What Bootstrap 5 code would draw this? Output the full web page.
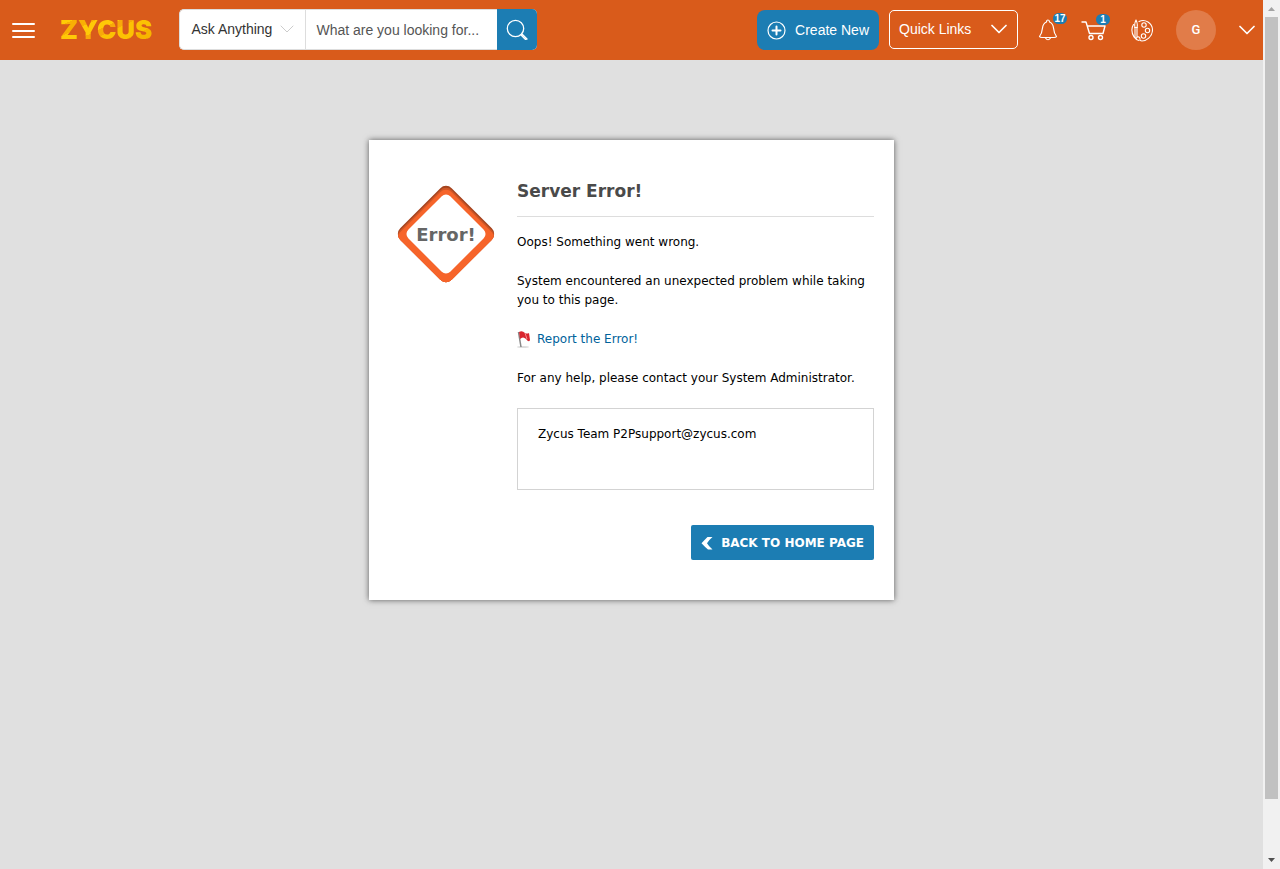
<!DOCTYPE html>
<html lang="en">
<head>
<meta charset="utf-8">
<meta name="viewport" content="width=device-width, initial-scale=1">
<title>Server Error</title>
<link href="https://cdn.jsdelivr.net/npm/bootstrap@5.3.0/dist/css/bootstrap.min.css" rel="stylesheet">
<style>
  :root { --brand: #d95b1b; --blue: #1c7db3; }
  body { background: #e0e0e0; color: #000; font: 14px/20px "Liberation Sans", Arial, sans-serif; }
  .topbar { height: 60px; background: var(--brand); padding: 0 8px 0 12px; }
  .plain { background: none; border: 0; padding: 0; color: #fff; display: flex; }
  .brand-name { font: 900 26px/30px Inter, sans-serif; margin: 0 27px 0 25px; text-decoration: none; color: transparent;
    background: linear-gradient(155deg, #ffcb05 0 15%, #f9b004 15% 30%, #ffc907 30% 45%, #f8a90a 45% 55%, #fcc203 55% 75%, #f7b500 75% 88%, #ffd21a 88%);
    -webkit-background-clip: text; background-clip: text; }
  .search { height: 41px; margin-bottom: 2px; border: 1px solid #ddd; border-right: 0; border-radius: 5px; background: #fff; }
  .scope { width: 126px; padding: 0 11px; border-right: 1px solid #ddd; color: #333; }
  .query { width: 191px; border: 0; padding: 2px 10px 0; color: #555; outline: 0; }
  .query::placeholder { color: #555; opacity: 1; }
  .go { width: 40px; margin: -1px 0; background: var(--blue); border-radius: 0 5px 5px 0; }
  .actions { gap: 23px; }
  .create { width: 122px; height: 40px; background: var(--blue); border-radius: 8px; padding: 0 10px; }
  .links { width: 129px; height: 39px; margin: 0 20px 2px 10px; border: 1px solid #fff; border-radius: 5px; padding: 0 10px 0 9px; }
  .count { position: absolute; top: -6px; left: 15px; height: 11px; min-width: 14px; padding: 0 1px; border-radius: 6px; background: var(--blue); font: bold 10px/11px "Liberation Sans", Arial, sans-serif; text-align: center; }
  .avatar { width: 40px; height: 40px; border-radius: 50%; background: #e17c49; font: 500 13px/20px Roboto, sans-serif; }
  .panel { width: 525px; margin-top: 80px; padding: 40px 20px 40px 28px; background: #fff; box-shadow: 0 0 6px rgba(0,0,0,.6); font: 12px/19px "DejaVu Sans", Verdana, sans-serif; }
  .sign { width: 98px; margin-top: 5px; }
  .details { width: 357px; }
  .panel h1 { font-size: 17px; line-height: 22px; font-weight: bold; color: #4a4a4a; padding-bottom: 14px; margin-bottom: 16px; border-bottom: 1px solid #ddd; }
  .panel p { margin-bottom: 20px; }
  .report { color: #00629b; text-decoration: none; gap: 5px; }
  .contact { height: 82px; border: 1px solid #d3d3d3; padding: 16px 20px; margin-bottom: 35px; }
  .back { height: 35px; background: var(--blue); border-radius: 2px; padding: 1px 10px 0; font-weight: bold; gap: 8px; }
  .rail { width: 17px; background: #f1f1f1; }
  .thumb { width: 13px; flex: 0 0 90%; background: #c1c1c1; }
  svg { display: block; flex: none; }
  .line { fill: none; stroke: currentColor; stroke-linecap: round; stroke-linejoin: round; }
</style>
</head>
<body>
<div class="d-flex min-vh-100">
  <div class="flex-grow-1">
    <header class="topbar d-flex align-items-center">
      <button class="plain" aria-label="Menu"><svg width="23" height="16" class="line" stroke-width="2"><path d="M1 2H22M1 9H22M1 15H22"/></svg></button>
      <a href="#" class="brand-name">ZYCUS</a>
      <form class="search d-flex">
        <button type="button" class="plain scope align-items-center justify-content-between">Ask Anything
          <svg width="14" height="8" class="line" style="color:#ccc"><path d="M1 1L7 7L13 1"/></svg></button>
        <input class="query" type="text" placeholder="What are you looking for..." aria-label="Search">
        <button type="button" class="plain go align-items-center justify-content-center" aria-label="Search"><svg width="22" height="22" class="line" stroke-width="1.3"><circle cx="9.5" cy="10.5" r="8.2"/><path d="M15 17L20 22M16 16L21 21"/></svg></button>
      </form>
      <div class="ms-auto d-flex align-items-center">
        <button class="plain create align-items-center justify-content-between"><svg width="19" height="19" class="line"><circle cx="9.5" cy="9.5" r="8.5" stroke-width="1.2"/><path d="M9.500 5.500V13.500M5.500 9.500H13.500" stroke-width="2"/></svg>Create New</button>
        <button class="plain links align-items-center justify-content-between">Quick Links<svg width="16" height="10" class="line" stroke-width="1.7"><path d="M1 1.500L8 8.500L15 1.500"/></svg></button>
        <div class="actions d-flex align-items-center">
          <button class="plain position-relative" aria-label="Notifications"><svg width="20" height="22" class="line" stroke-width="1.2"><path d="M8.500 3Q8.500 1 10 1Q11.500 1 11.500 3Q15 4.500 15.500 9C16 14 16.500 15 18.500 17.500Q18 18.500 16 18.500H4Q2 18.500 1.500 17.500C3.500 15 4 14 4.500 9Q5 4.500 8.500 3M7.500 19Q10 22.500 12.500 19"/></svg><span class="count">17</span></button>
          <button class="plain position-relative" aria-label="Cart"><svg width="27" height="21" class="line" stroke-width="1.4"><path d="M1 2H5L8.500 13.500H22L24 6H6.500"/><circle cx="10" cy="17.500" r="2"/><circle cx="19.500" cy="17.500" r="2"/></svg><span class="count">1</span></button>
          <button class="plain" aria-label="Theme"><svg width="22" height="23" class="line" stroke-width="1.1"><path d="M5 1Q3 5 4 8.500V18Q5 21 6 18V8.500Q7 5 5 1M3.500 8.500H6.500M8 2.500C14-0.500 21.500 4 21.500 11C21.500 18 15 22 11 22Q8.500 22 9 19.500Q8.500 17.500 6.500 18M2.500 5.500Q-1 11 3 18Q5 21 8 21.500"/><circle cx="13" cy="6" r="2.2"/><circle cx="16.5" cy="11.5" r="2.2"/><circle cx="12.5" cy="17" r="2.2"/></svg></button>
          <button class="plain avatar align-items-center justify-content-center">G</button>
          <button class="plain" aria-label="Account menu"><svg width="16" height="10" class="line" stroke-width="1.7"><path d="M1 1.500L8 8.500L15 1.500"/></svg></button>
        </div>
      </div>
    </header>
    <main class="panel mx-auto d-flex justify-content-between">
      <svg class="sign" width="98" height="98" viewBox="0 0 98 98" role="img" aria-label="Error!">
        <defs><clipPath id="edge"><rect x="12.6" y="12.6" width="72.8" height="72.8" rx="8" transform="rotate(45 49 49)"/></clipPath></defs>
        <g clip-path="url(#edge)">
          <rect width="98" height="98" fill="#a54520"/>
          <rect x="12.6" y="12.6" width="72.8" height="72.8" rx="8" transform="translate(0 2) rotate(45 49 49)" fill="#cf5626"/>
          <rect x="12.6" y="12.6" width="72.8" height="72.8" rx="8" transform="translate(0 4) rotate(45 49 49)" fill="#f6642a"/>
          <rect y="52" width="98" height="46" fill="#f6642a"/>
        </g>
        <rect x="19.3" y="19.3" width="59.4" height="59.4" rx="6" transform="rotate(45 49 49)" fill="#fff"/>
        <text x="49" y="56" text-anchor="middle" font-size="18" font-weight="bold" fill="#666">Error!</text>
      </svg>
      <div class="details">
        <h1>Server Error!</h1>
        <p>Oops! Something went wrong.</p>
        <p>System encountered an unexpected problem while taking you to this page.</p>
        <p><a href="#" class="report d-flex align-items-center"><svg width="15" height="18"><ellipse cx="6" cy="16" rx="6" ry="1" fill="#ddd"/><path d="M1.500 1L4 16" stroke="#888" stroke-width="1.5"/><path d="M2 1Q5-1 8 2Q10 3 12 2L13 9Q12 12 9 8Q6 5 3 8Z" fill="#d9252f"/><path d="M8 2L10 8" stroke="#f38a8d"/></svg>Report the Error!</a></p>
        <p>For any help, please contact your System Administrator.</p>
        <div class="contact">Zycus Team P2Psupport@zycus.com</div>
        <button class="plain back align-items-center ms-auto"><svg width="12" height="14" fill="#fff"><path d="M6.500 1H11.500Q8 4 6 7.200Q8 10.500 11.500 13.500H7Q4.500 11.500 0.500 7.200Q4 3.500 6.500 1Z"/></svg>BACK TO HOME PAGE</button>
      </div>
    </main>
  </div>
  <div class="rail d-flex flex-column align-items-center justify-content-between" aria-hidden="true">
    <svg width="17" height="17"><path d="M5 11L8.500 7L12 11Z" fill="#a3a3a3"/></svg>
    <div class="thumb"></div>
    <svg class="mt-auto" width="17" height="17"><path d="M5 6L8.500 10L12 6Z" fill="#505050"/></svg>
  </div>
</div>
<script src="https://cdn.jsdelivr.net/npm/bootstrap@5.3.0/dist/js/bootstrap.bundle.min.js"></script>
</body>
</html>
